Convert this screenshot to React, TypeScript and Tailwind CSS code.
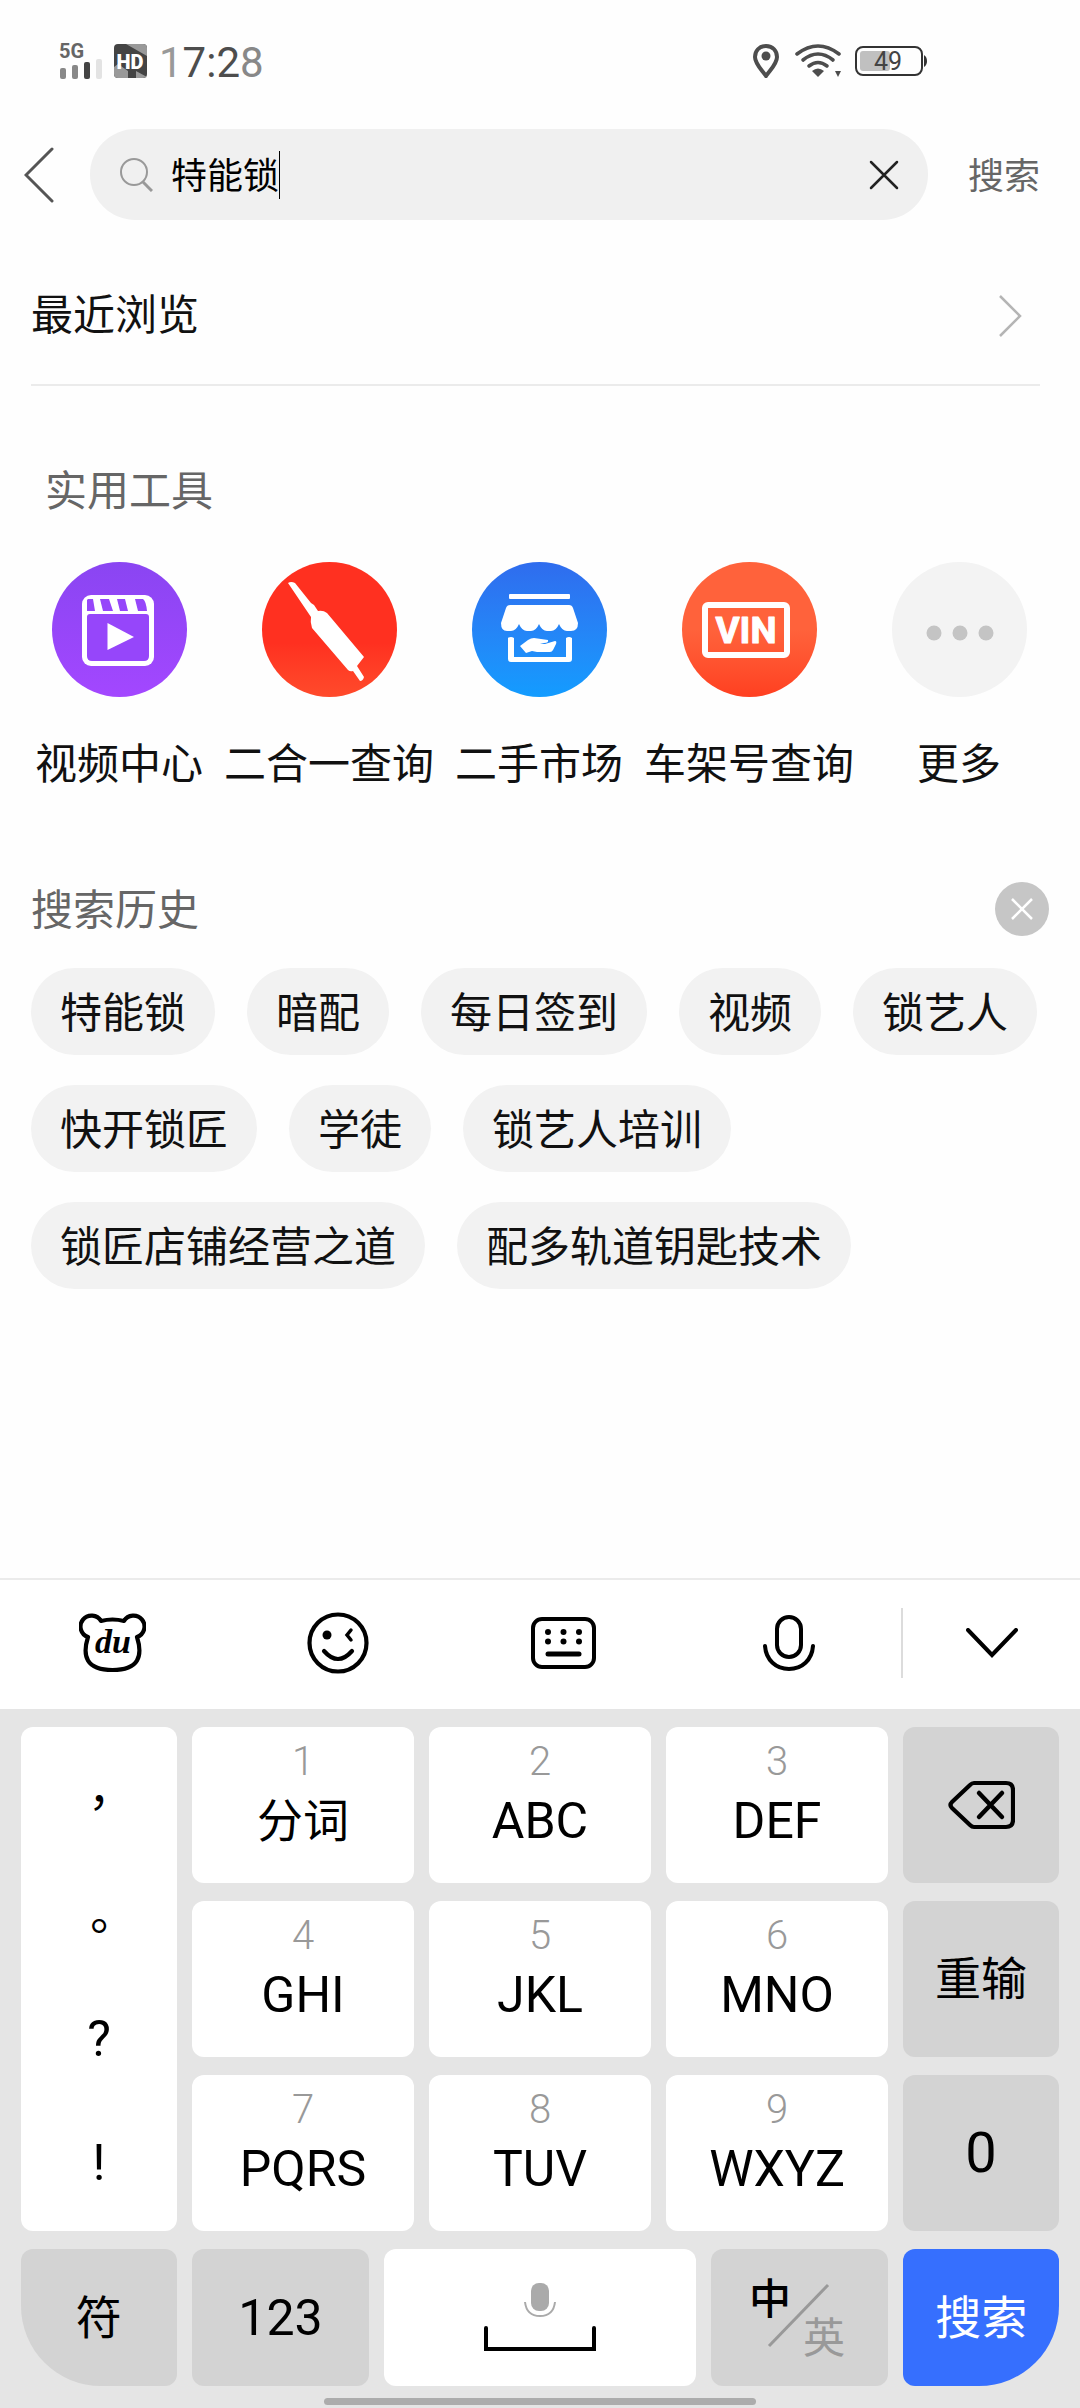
import type { ReactNode } from 'react'

const historyItems = [
  '特能锁',
  '暗配',
  '每日签到',
  '视频',
  '锁艺人',
  '快开锁匠',
  '学徒',
  '锁艺人培训',
  '锁匠店铺经营之道',
  '配多轨道钥匙技术',
]

const tools = [
  { label: '视频中心', icon: <VideoIcon />, bg: 'bg-linear-to-b from-[#8a45f2] to-[#a347ff]' },
  { label: '二合一查询', icon: <PickIcon />, bg: 'bg-linear-to-b from-[#ff3020] from-60% to-[#ff4a2b]' },
  { label: '二手市场', icon: <ShopIcon />, bg: 'bg-linear-to-b from-[#2f6cee] to-[#129cff]' },
  { label: '车架号查询', icon: <VinIcon />, bg: 'bg-linear-to-b from-[#ff623b] from-50% to-[#ff3f20]' },
  { label: '更多', icon: <MoreIcon />, bg: 'bg-[#f3f3f3]' },
]

const letterKeys = [
  ['1', '分词'],
  ['2', 'ABC'],
  ['3', 'DEF'],
  ['4', 'GHI'],
  ['5', 'JKL'],
  ['6', 'MNO'],
  ['7', 'PQRS'],
  ['8', 'TUV'],
  ['9', 'WXYZ'],
]

function VideoIcon() {
  return (
    <svg viewBox="0 0 135 135" className="size-full">
      <rect x="30" y="33" width="72" height="71" rx="9" fill="#fff" />
      <path
        d="M36 37h5l2 12h-8V38zM48 37h9l4 12H51zM65 37h8l3 12h-8zM83 37h8q3 2 4 12h-9zM38 52h56q3 0 3 3v39q0 5-5 5H40q-5 0-5-5V55q0-3 3-3z"
        fill="#9646fa"
      />
      <path d="M55.500 61v27L82 75z" fill="#fff" />
    </svg>
  )
}

function PickIcon() {
  return (
    <svg viewBox="0 0 135 135" className="size-full">
      <path
        d="M26 21q3-2 7 0l16 20 3 2 4 6q5-1 9 2l37 44-7 9 7 11q-1 4-4 4l-7-10q-3 1-5-1L50 66q-2-6-1-11z"
        fill="#fff"
      />
    </svg>
  )
}

function ShopIcon() {
  return (
    <svg viewBox="0 0 135 135" className="size-full" fill="#fff">
      <rect x="37" y="32" width="61" height="5" rx="1" />
      <path d="M38 43h59q3 0 4 3l5 15q0 8-7 8h-4q-5 0-8-7-3 7-8 7h-4q-5 0-8-7-3 7-8 7h-4q-5 0-8-7-3 7-8 7h-4q-6 0-6-8l5-15q1-3 4-3z" />
      <path d="M36 76q3-2 6 0v19h52V76q3-2 6 0v21q0 3-3 3H39q-3 0-3-3z" />
      <path d="M48 84l8-6q3-2 6-2l14 2q1 3-4 3l-4 1h5l10-3q2 0 1 3l-3 6q-1 2-3 2H65l-5-1-6 2z" />
    </svg>
  )
}

function VinIcon() {
  return (
    <svg viewBox="0 0 135 135" className="size-full">
      <rect x="23" y="43" width="82" height="50" rx="3" fill="none" stroke="#fff" strokeWidth="6" />
      <text
        x="64"
        y="81"
        textAnchor="middle"
        fontSize="37"
        fill="#fff"
        stroke="#fff"
        strokeLinejoin="round"
        className="font-['Roboto',sans-serif] font-bold"
      >
        VIN
      </text>
    </svg>
  )
}

function MoreIcon() {
  return (
    <svg viewBox="0 0 135 135" className="size-full" fill="#c4c4c4">
      <circle cx="42" cy="71" r="7.500" />
      <circle cx="68" cy="71" r="7.500" />
      <circle cx="94" cy="71" r="7.500" />
    </svg>
  )
}

function StatusBar() {
  return (
    <div className="flex h-[122px] items-center justify-between pr-[153px] pl-[59px] text-[#4d4d4d]">
      <div className="flex items-center">
        <div className="flex w-[43px] flex-col">
          <span className="text-[20px] leading-[16px] font-bold text-[#666]">5G</span>
          <svg width="43" height="21" viewBox="0 0 43 21" aria-hidden="true">
            <rect x="1" y="9" width="6" height="11" rx="2" fill="#888" />
            <rect x="13" y="6" width="6" height="14" rx="2" fill="#888" />
            <rect x="25" y="3" width="6" height="17" rx="2" fill="#444" />
            <rect x="37" y="0" width="6" height="20" rx="2" fill="#e3e3e3" />
          </svg>
        </div>
        <svg className="ml-3" width="33" height="34" viewBox="0 0 33 34">
          <rect width="33" height="34" rx="4" fill="#444" />
          <path d="M12 0h17q4 0 4 4v8z" fill="#999" />
          <path d="M0 23l4-3 10 7v7H4q-4 0-4-4zM22 27l11 6-4 1h-7z" fill="#999" />
          <text x="16" y="25" textAnchor="middle" fontSize="20" fill="#fff" className="font-['Roboto',sans-serif] font-black">
            HD
          </text>
        </svg>
        <span className="ml-3 pt-1 text-[42px] leading-[48px]">
          <span className="text-[#999]">1</span>7:2<span className="text-[#888]">8</span>
        </span>
      </div>
      <div className="flex items-center">
        <svg width="26" height="34" viewBox="0 0 26 34">
          <path d="M13 2C6 2 2 7 2 13c0 7 7 13 11 19 4-6 11-12 11-19C24 7 20 2 13 2z" fill="none" stroke="currentColor" strokeWidth="4" />
          <circle cx="13" cy="12" r="4.500" fill="currentColor" />
        </svg>
        <svg className="ml-4" width="46" height="34" viewBox="0 0 46 34">
          <g fill="none" stroke="currentColor" strokeWidth="3.600" strokeLinecap="round">
            <path d="M2 10Q23-6 44 10" />
            <path d="M8 16q15-12 30 0" />
            <path d="M14 22q9-7 18 0" />
          </g>
          <path d="M17 27q6-5 12 0l-6 6z" fill="currentColor" />
          <path d="M40 27h6l-3 6z" fill="currentColor" />
        </svg>
        <svg className="ml-[14px]" width="72" height="30" viewBox="0 0 72 30">
          <rect x="1" y="1" width="66" height="28" rx="7" fill="none" stroke="#333" strokeWidth="2" />
          <rect x="5" y="5" width="30" height="20" rx="3" fill="#c0c0c0" />
          <path d="M69 9q3 2 3 6t-3 6z" fill="#333" />
          <text x="33" y="24" textAnchor="middle" fontSize="25" fill="#444" className="font-['Roboto',sans-serif]">
            49
          </text>
        </svg>
      </div>
    </div>
  )
}

function SearchBar() {
  return (
    <form className="mt-[7px] flex items-center pr-10" onSubmit={(e) => e.preventDefault()}>
      <button type="button" aria-label="返回" className="flex w-[90px] shrink-0 pl-6">
        <svg width="30" height="56" viewBox="0 0 30 56" fill="none" stroke="#555" strokeWidth="3" strokeLinecap="round">
          <path d="M28 2L2 28l26 26" />
        </svg>
      </button>
      <div className="flex h-[91px] min-w-0 flex-1 items-center rounded-full bg-[#f0f0f0] px-[29px]">
        <svg width="34" height="35" viewBox="0 0 34 35" fill="none" stroke="#999" strokeWidth="2">
          <circle cx="15" cy="15" r="13" />
          <path d="M24 25l9 9" strokeWidth="3" />
        </svg>
        <input
          type="text"
          aria-label="搜索内容"
          defaultValue="特能锁"
          className="ml-[18px] bg-transparent pt-1 text-[36px] leading-[48px] text-black outline-none [field-sizing:content]"
        />
        <span className="h-[48px] w-px bg-black" />
        <button type="button" aria-label="清空" className="ml-auto">
          <svg width="30" height="30" viewBox="0 0 30 30" stroke="#222" strokeWidth="2.500" strokeLinecap="round">
            <path d="M2 2l26 26M28 2L2 28" />
          </svg>
        </button>
      </div>
      <button type="submit" className="ml-10 pt-1 text-[36px] leading-[48px] text-[#666]">
        搜索
      </button>
    </form>
  )
}

function ToolKey({ label, children }: { label: string; children: ReactNode }) {
  return (
    <button type="button" aria-label={label} className="flex flex-1 items-center justify-center">
      {children}
    </button>
  )
}

function KeyboardToolbar() {
  return (
    <div className="flex h-[131px] items-center border-t-2 border-[#ebebeb] bg-white pb-1">
      <div className="flex flex-[903]">
        <ToolKey label="百度输入法">
          <svg width="67" height="60" viewBox="0 0 67 60">
            <path
              d="M22 8A11 11 0 1 0 9 24C3 43 7 57 33.500 57S64 43 58 24A11 11 0 1 0 45 8Q33.500 5 22 8z"
              fill="none"
              stroke="#000"
              strokeWidth="4.200"
              strokeLinejoin="round"
            />
            <text x="34" y="40" textAnchor="middle" fontSize="34" className="font-['Liberation_Serif',serif] font-bold italic">
              du
            </text>
          </svg>
        </ToolKey>
        <ToolKey label="表情">
          <svg width="62" height="62" viewBox="0 0 62 62" fill="none" stroke="#000" strokeWidth="4.200" strokeLinecap="round">
            <circle cx="31" cy="31" r="28.500" />
            <circle cx="20" cy="23" r="4.500" fill="#000" stroke="none" />
            <path d="M44 18l-4 5 4 5" strokeWidth="3.500" />
            <path d="M17 39q14 16 28 0" />
          </svg>
        </ToolKey>
        <ToolKey label="键盘">
          <svg width="65" height="52" viewBox="0 0 65 52" fill="none" stroke="#000" strokeWidth="4">
            <rect x="2" y="2" width="61" height="48" rx="9" />
            <g fill="#000" stroke="none">
              <circle cx="17" cy="15" r="3" />
              <circle cx="32.500" cy="15" r="3" />
              <circle cx="48" cy="15" r="3" />
              <circle cx="17" cy="24.500" r="3" />
              <circle cx="32.500" cy="24.500" r="3" />
              <circle cx="48" cy="24.500" r="3" />
            </g>
            <path d="M17 37h31" strokeWidth="5" strokeLinecap="round" />
          </svg>
        </ToolKey>
        <ToolKey label="语音">
          <svg width="52" height="56" viewBox="0 0 52 56" fill="none" stroke="#000" strokeWidth="4" strokeLinecap="round">
            <rect x="14" y="2" width="24" height="40" rx="12" />
            <path d="M2 31c1 14 11 23 24 23s23-9 24-23" />
          </svg>
        </ToolKey>
      </div>
      <div className="flex h-[70px] flex-[177] border-l-2 border-[#dcdcdc]">
        <ToolKey label="收起键盘">
          <svg width="52" height="30" viewBox="0 0 52 30" fill="none" stroke="#000" strokeWidth="4" strokeLinecap="round">
            <path d="M2 2l24 25L50 2" />
          </svg>
        </ToolKey>
      </div>
    </div>
  )
}

function GrayKey({ className = '', label, children }: { className?: string; label?: string; children: ReactNode }) {
  return (
    <button
      type="button"
      aria-label={label}
      className={`flex items-center justify-center rounded-xl bg-[#d3d3d3] text-[46px] leading-[64px] ${className}`}
    >
      {children}
    </button>
  )
}

function Keyboard() {
  return (
    <section className="mt-auto bg-[#e5e5e5] text-black">
      <KeyboardToolbar />
      <div className="px-[21px] pt-[18px]">
        <div className="grid grid-cols-[13fr_58fr_13fr] gap-x-[15px]">
          <div className="grid grid-rows-4 rounded-xl bg-white pt-2 font-['Roboto','Noto_Sans_CJK_TC',sans-serif] text-[50px]">
            <button type="button" className="pt-3 text-[46px]">，</button>
            <button type="button" className="pt-3 text-[46px]">。</button>
            <button type="button" className="pb-3">?</button>
            <button type="button" className="pb-3">!</button>
          </div>
          <div className="grid grid-cols-3 gap-x-[15px] gap-y-[18px]">
            {letterKeys.map(([digit, letters]) => (
              <button key={digit} type="button" className="flex h-[156px] flex-col items-center rounded-xl bg-white pt-[11px]">
                <span className="text-[40px] leading-[48px] font-light text-[#999]">{digit}</span>
                <span className={letters === '分词' ? 'text-[46px] leading-[70px]' : 'text-[50px] leading-[70px]'}>{letters}</span>
              </button>
            ))}
          </div>
          <div className="grid grid-rows-3 gap-y-[18px]">
            <GrayKey label="删除">
              <svg width="67" height="50" viewBox="0 0 67 50" fill="none" stroke="#000" strokeWidth="4.200" strokeLinecap="round">
                <path d="M26 3h32q7 0 7 7v30q0 7-7 7H26q-2 0-4-2L4 28q-3-3 0-6L22 5q2-2 4-2z" />
                <path d="M31 13l23 24M54 13L31 37" strokeWidth="4.500" />
              </svg>
            </GrayKey>
            <GrayKey>重输</GrayKey>
            <GrayKey>
              <span className="text-[56px]">0</span>
            </GrayKey>
          </div>
        </div>
        <div className="mt-[18px] grid h-[137px] grid-cols-[7fr_8fr_14fr_8fr_7fr] gap-x-[15px]">
          <GrayKey className="rounded-bl-[80px]">符</GrayKey>
          <GrayKey>
            <span className="text-[50px]">123</span>
          </GrayKey>
          <button type="button" aria-label="空格" className="flex items-center justify-center rounded-xl bg-white">
            <svg width="114" height="72" viewBox="0 2 114 72" fill="none">
              <rect x="48" y="3" width="18" height="28" rx="8" fill="#aaa" />
              <path d="M42 22c1 9 6 14 15 14s14-5 15-14" stroke="#aaa" strokeWidth="2" />
              <path d="M3 48v21h108V48" stroke="#000" strokeWidth="4" strokeLinecap="round" />
            </svg>
          </button>
          <GrayKey>
            <svg width="130" height="130" viewBox="-5 -20 130 130">
              <text x="10" y="41" fontSize="42" className="font-['Noto_Sans_CJK_SC',sans-serif] font-medium">
                中
              </text>
              <path d="M30 73L89 12" stroke="#999" strokeWidth="3" />
              <text x="64" y="80" fontSize="42" fill="#999" className="font-['Noto_Sans_CJK_SC',sans-serif]">
                英
              </text>
            </svg>
          </GrayKey>
          <button
            type="button"
            className="flex items-center justify-center rounded-xl rounded-br-[80px] bg-[#366ffe] text-[46px] leading-[64px] text-white"
          >
            搜索
          </button>
        </div>
      </div>
      <div className="flex justify-center pt-3 pb-[3px]">
        <div className="h-[7px] w-2/5 rounded-full bg-[#acacac]" />
      </div>
    </section>
  )
}

function App() {
  return (
    <div className="flex min-h-screen flex-col bg-[#fefefe] font-['Roboto','Noto_Sans_CJK_SC',sans-serif] text-[42px] leading-[60px] text-[#111]">
      <StatusBar />
      <SearchBar />
      <div className="mr-10 ml-[31px] mt-[66px] border-b-2 border-[#ebebeb] pb-[38px]">
        <a href="#recent" className="flex items-center justify-between pr-[18px]">
          最近浏览
          <svg width="24" height="44" viewBox="0 0 24 44" fill="none" stroke="#b5b5b5" strokeWidth="2.500">
            <path d="M2 2l20 20L2 42" />
          </svg>
        </a>
      </div>
      <section className="mt-[76px] pr-4 pl-[14px]">
        <h2 className="pl-[31px] text-[#666]">实用工具</h2>
        <div className="mt-10 grid grid-cols-5">
          {tools.map((tool) => (
            <button key={tool.label} type="button" className="flex flex-col items-center whitespace-nowrap">
              <span className={`size-[135px] rounded-full ${tool.bg}`}>{tool.icon}</span>
              <span className="mt-[38px]">{tool.label}</span>
            </button>
          ))}
        </div>
      </section>
      <section className="mt-[82px] px-[31px]">
        <div className="flex items-center justify-between">
          <h2 className="pt-1 text-[#666]">搜索历史</h2>
          <button type="button" aria-label="清除搜索历史" className="flex size-[54px] items-center justify-center rounded-full bg-[#c6c6c6]">
            <svg width="22" height="22" viewBox="0 0 22 22" stroke="#fff" strokeWidth="2.500">
              <path d="M1 1l20 20M21 1L1 21" />
            </svg>
          </button>
        </div>
        <div className="mt-[27px] mb-8 flex flex-wrap gap-x-8 gap-y-[30px]">
          {historyItems.map((item) => (
            <button key={item} type="button" className="h-[87px] rounded-full bg-[#f2f2f2] px-[29px] pt-1">
              {item}
            </button>
          ))}
        </div>
      </section>
      <Keyboard />
    </div>
  )
}

export default App
